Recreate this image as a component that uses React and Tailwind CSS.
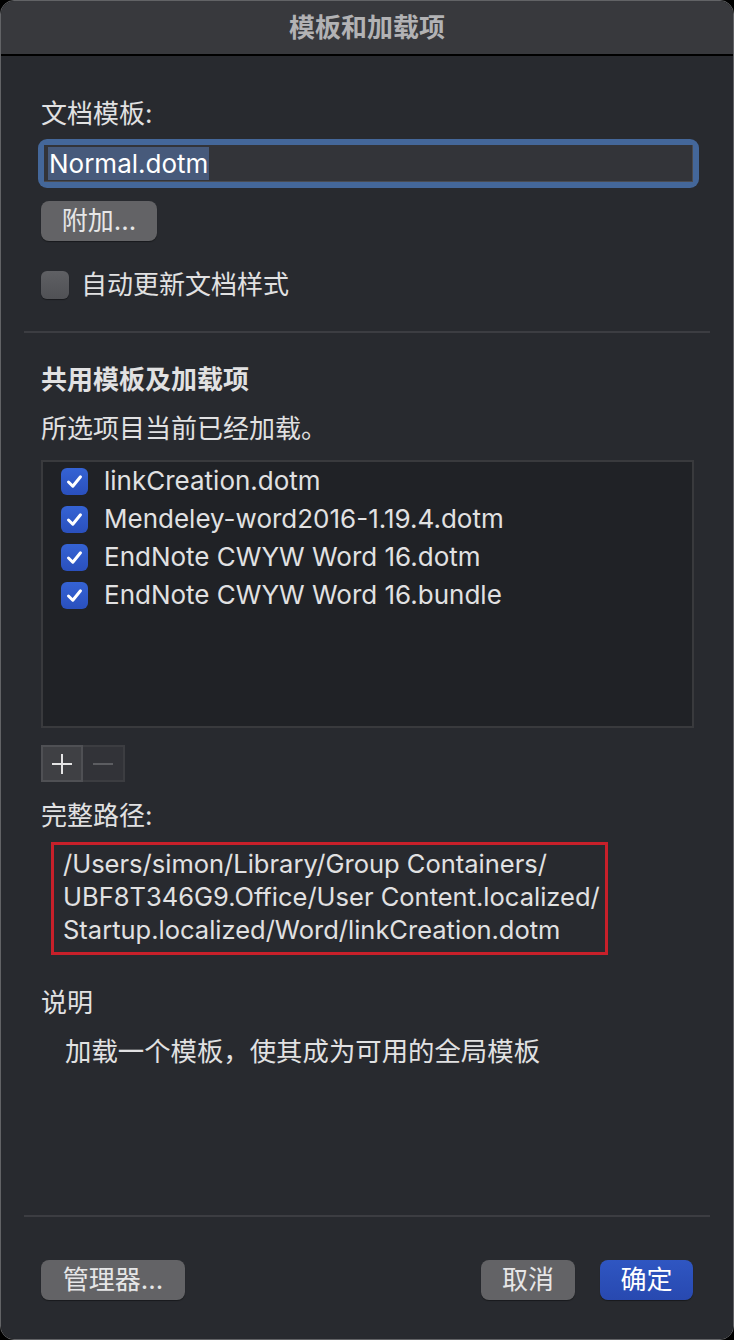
import { useState } from 'react';

const items = [
  'linkCreation.dotm',
  'Mendeley-word2016-1.19.4.dotm',
  'EndNote CWYW Word 16.dotm',
  'EndNote CWYW Word 16.bundle',
];

function Check() {
  return (
    <div className="w-[27px] h-[27px] rounded-[6px] bg-gradient-to-b from-[#3563d4] to-[#2a50bd] flex items-center justify-center shrink-0">
      <svg width="19" height="19" viewBox="0 0 19 19" fill="none">
        <path d="M3.5 10 L7.8 14.2 L15.5 4.8" stroke="white" strokeWidth="3" strokeLinecap="round" strokeLinejoin="round" />
      </svg>
    </div>
  );
}

export default function App() {
  const [autoUpdate, setAutoUpdate] = useState(false);

  return (
    <div className="w-[734px] h-[1340px] bg-black font-[Inter,'Noto_Sans_CJK_SC',sans-serif] text-[26px] text-[#e1e1e2]">
      <div className="h-full rounded-[14px] border border-[#626366] overflow-hidden flex flex-col">
        {/* Title bar */}
        <div className="h-[55px] shrink-0 bg-[#38393d] border-b-2 border-black flex items-center justify-center">
          <span className="text-[26px] font-bold text-[#b2b2b4] leading-none">模板和加载项</span>
        </div>

        {/* Body */}
        <div className="flex-1 bg-[#282a2f] px-[40px] flex flex-col">
          <div className="mt-[43px] h-[30px] leading-[30px]">文档模板:</div>

          <div className="mt-[10px] -ml-[3px] w-[661px] h-[49px] rounded-[9px] bg-[#44679a] p-[6px]">
            <div className="h-full bg-[#333439] border-r border-b border-[#4a4b50] flex items-center pl-[4px]">
              <span className="bg-[#475a7b] text-white leading-[33px] h-[33px] px-[1px]">Normal.dotm</span>
            </div>
          </div>

          <button className="mt-[13px] w-[116px] h-[40px] rounded-[8px] bg-[#636366] text-[#e6e6e7] leading-none flex items-center justify-center shadow-[0_1px_1px_rgba(0,0,0,0.4)]">
            附加...
          </button>

          <label className="mt-[30px] flex items-center gap-[12px] h-[28px] cursor-pointer" onClick={() => setAutoUpdate(!autoUpdate)}>
            <div className="w-[28px] h-[28px] rounded-[6px] bg-gradient-to-b from-[#5f6064] to-[#505155] shadow-[0_1px_1px_rgba(0,0,0,0.4)]" />
            <span className="leading-[28px]">自动更新文档样式</span>
          </label>

          <div className="mt-[32px] -mx-[17px] h-[2px] bg-[#3c3d42]" />

          <div className="mt-[32px] h-[30px] leading-[30px] font-bold">共用模板及加载项</div>
          <div className="mt-[19px] h-[30px] leading-[30px]">所选项目当前已经加载。</div>

          {/* List box */}
          <div className="mt-[16px] w-[653px] h-[268px] border-2 border-[#393a3d] bg-[#202226]">
            {items.map((name) => (
              <div key={name} className="h-[38px] flex items-center pl-[18px] gap-[16px]">
                <Check />
                <span className="leading-[38px] whitespace-nowrap">{name}</span>
              </div>
            ))}
          </div>

          {/* +/- */}
          <div className="mt-[17px] flex h-[37px]">
            <button className="w-[42px] h-full bg-[#3f4044] border-2 border-[#4f5054] flex items-center justify-center">
              <svg width="22" height="22" viewBox="0 0 22 22">
                <path d="M11 1 V21 M1 11 H21" stroke="#e4e4e5" strokeWidth="2" />
              </svg>
            </button>
            <button className="w-[42px] h-full bg-[#323338] border-2 border-l-0 border-[#3c3d41] flex items-center justify-center">
              <svg width="22" height="22" viewBox="0 0 22 22">
                <path d="M1 11 H21" stroke="#5c5d61" strokeWidth="2" />
              </svg>
            </button>
          </div>

          <div className="mt-[19px] h-[30px] leading-[30px]">完整路径:</div>

          <div className="mt-[11px] ml-[10px] w-[557px] h-[113px] border-[3px] border-[#c8202a] pl-[9px] pt-[2px] text-[25.5px] leading-[33px] whitespace-nowrap">
            <div>/Users/simon/Library/Group Containers/</div>
            <div>UBF8T346G9.Office/User Content.localized/</div>
            <div>Startup.localized/Word/linkCreation.dotm</div>
          </div>

          <div className="mt-[33px] h-[30px] leading-[30px]">说明</div>
          <div className="mt-[18px] ml-[24px] h-[30px] leading-[30px] text-[26.4px]">加载一个模板，使其成为可用的全局模板</div>

          <div className="mt-auto -mx-[17px] h-[2px] bg-[#3c3d42]" />

          <div className="mt-[43px] mb-[39px] flex items-center h-[40px]">
            <button className="w-[144px] h-[40px] rounded-[8px] bg-[#636366] text-[#e6e6e7] leading-none flex items-center justify-center shadow-[0_1px_1px_rgba(0,0,0,0.4)]">
              管理器...
            </button>
            <div className="flex-1" />
            <button className="w-[94px] h-[40px] rounded-[8px] bg-[#636366] text-[#e6e6e7] leading-none flex items-center justify-center shadow-[0_1px_1px_rgba(0,0,0,0.4)]">
              取消
            </button>
            <button className="ml-[25px] w-[93px] h-[40px] rounded-[8px] bg-gradient-to-b from-[#2f56c2] to-[#2849b0] text-white leading-none flex items-center justify-center shadow-[0_1px_1px_rgba(0,0,0,0.4)]">
              确定
            </button>
          </div>
        </div>
      </div>
    </div>
  );
}
